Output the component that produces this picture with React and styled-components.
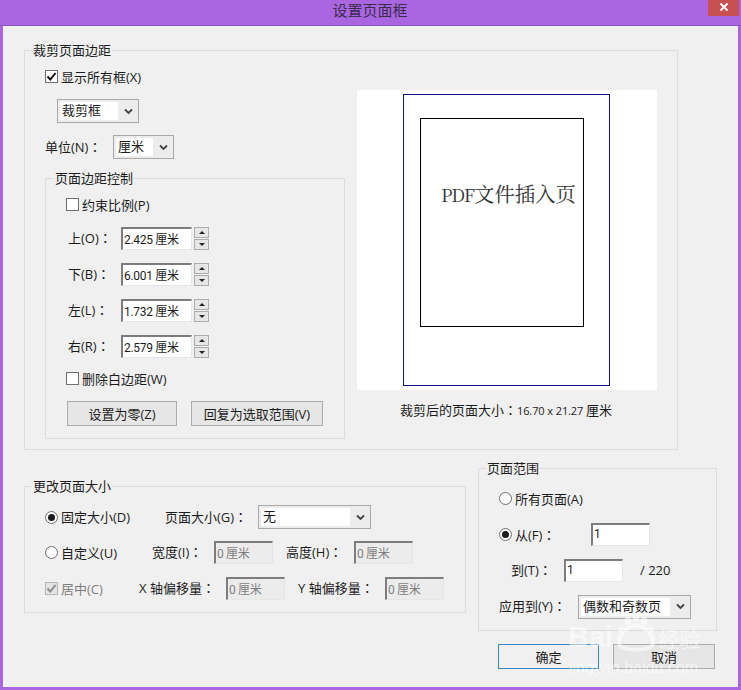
import styled, { createGlobalStyle } from "styled-components";

const GlobalStyle = createGlobalStyle`
  html, body { margin: 0; padding: 0; background: #a966e0; }
  body { font-family: "Open Sans", "Noto Sans CJK SC", sans-serif; font-size: 13px; color: #1c1c1c; }
`;

const Win = styled.div`
  position: relative;
  width: 741px;
  height: 690px;
  background: #a966e0;
  overflow: hidden;
`;

const TitleBar = styled.div`
  height: 26px;
  box-sizing: border-box;
  border-bottom: 1px solid #8d55bd;
  display: flex;
  align-items: center;
  justify-content: center;
  font-size: 15px;
  line-height: 22px;
  padding: 0 1px 5px 0;
  color: #3b2b4e;
`;

const CloseBtn = styled.div`
  position: absolute;
  top: 0;
  right: 2px;
  width: 31px;
  height: 16px;
  padding-bottom: 2px;
  box-sizing: border-box;
  background: #c75050;
  display: flex;
  align-items: center;
  justify-content: center;
`;

const Body = styled.div`
  margin: 0 3px;
  height: 661px;
  background: #f0f0f0;
  padding-left: 21px;
  box-sizing: border-box;
  overflow: hidden;
`;

const Group = styled.fieldset`
  margin: ${(p) => p.$mt || 0}px 0 0 0;
  padding: 0;
  width: ${(p) => p.$w}px;
  box-sizing: border-box;
  border: 1px solid #dcdcdc;
  min-width: 0;
`;

const Legend = styled.legend`
  margin-left: ${(p) => p.$ml || 7}px;
  padding: 0 1px;
  height: 16px;
  line-height: 16px;
  font-size: 13px;
`;

const Inset = styled.div`
  padding: 0 0 ${(p) => p.$pb || 0}px 20px;
`;

const TopSplit = styled.div`
  display: flex;
`;

const LeftCol = styled.div`
  width: 299px;
  flex: none;
`;

const Row = styled.div`
  display: flex;
  align-items: center;
  height: ${(p) => p.$h || 23}px;
  margin-top: ${(p) => p.$mt || 0}px;
  margin-left: ${(p) => p.$ml || 0}px;
`;

const Label = styled.span`
  flex: none;
  width: ${(p) => (p.$w ? `${p.$w}px` : "auto")};
  margin-left: ${(p) => p.$ml || 0}px;
  margin-bottom: 2px;
  color: ${(p) => (p.$dim ? "#7e7e7e" : "inherit")};
  white-space: nowrap;
`;

const Colon = styled.span`
  font-family: "Noto Sans CJK TC", sans-serif;
`;

const Opt = styled.div`
  display: flex;
  align-items: center;
  flex: none;
  width: ${(p) => (p.$w ? `${p.$w}px` : "auto")};
  gap: 3px;
  ${Label} { margin-bottom: 1px; }
`;

const CheckBox = styled.span`
  width: 13px;
  height: 13px;
  flex: none;
  box-sizing: border-box;
  border: 1px solid ${(p) => (p.$dim ? "#b5b5b5" : "#6f6f6f")};
  background: ${(p) => (p.$dim ? "#e4e4e4" : "#fff")};
  display: flex;
  align-items: center;
  justify-content: center;
`;

const Radio = styled.span`
  width: 13px;
  height: 13px;
  flex: none;
  box-sizing: border-box;
  border: 1px solid #6f6f6f;
  border-radius: 50%;
  background: #fff;
  display: flex;
  align-items: center;
  justify-content: center;
  &::after {
    content: "";
    display: ${(p) => (p.$on ? "block" : "none")};
    width: 7px;
    height: 7px;
    border-radius: 50%;
    background: #1c1c1c;
  }
`;

const SelectBox = styled.div`
  display: flex;
  align-items: center;
  flex: none;
  width: ${(p) => p.$w}px;
  height: 24px;
  box-sizing: border-box;
  border: 1px solid #a9a9a9;
  background: #ececec;
  padding: 2px 0 2px 2px;
`;

const SelectText = styled.div`
  flex: 1;
  height: 100%;
  background: #fff;
  padding-left: 2px;
  line-height: 16px;
  font-size: 13px;
  overflow: hidden;
  white-space: nowrap;
`;

const SelectArrow = styled.div`
  width: 20px;
  flex: none;
  display: flex;
  align-items: center;
  justify-content: center;
`;

const Field = styled.input`
  flex: none;
  width: ${(p) => p.$w || 59}px;
  height: 23px;
  box-sizing: border-box;
  padding: 0 0 2px 1px;
  margin: 0;
  font-family: Roboto, "Noto Sans CJK SC", sans-serif;
  font-size: 12px;
  letter-spacing: -0.3px;
  outline: none;
  border-style: solid;
  border-width: 2px 1px 1px 2px;
  border-color: #7d7d7d #e6e6e6 #e6e6e6 #7d7d7d;
  background: ${(p) => (p.disabled ? "#ececec" : "#fff")};
  color: ${(p) => (p.disabled ? "#7e7e7e" : "#1c1c1c")};
`;

const Spin = styled.div`
  display: flex;
  flex-direction: column;
  margin-left: 2px;
  gap: 1px;
`;

const SpinBtn = styled.div`
  width: 15px;
  height: 11px;
  box-sizing: border-box;
  border: 1px solid #adadad;
  background: #e6e6e6;
  display: flex;
  align-items: center;
  justify-content: center;
  &::after {
    content: "";
    width: 0;
    height: 0;
    border-left: 3px solid transparent;
    border-right: 3px solid transparent;
    border-${(p) => (p.$up ? "bottom" : "top")}: 3px solid #222;
  }
`;

const BtnRow = styled(Row)`
  gap: 14px;
`;

const PushBtn = styled.div`
  flex: none;
  width: ${(p) => p.$w}px;
  height: 25px;
  padding-bottom: 1px;
  box-sizing: border-box;
  border: 1px solid ${(p) => (p.$primary ? "#3a86bf" : "#acacac")};
  background: ${(p) => (p.$primary ? "#f0f0f0" : "#e6e6e6")};
  display: flex;
  align-items: center;
  justify-content: center;
  white-space: nowrap;
`;

const PreviewCol = styled.div`
  width: 300px;
  margin: 32px 0 0 13px;
  flex: none;
`;

const Preview = styled.div`
  width: 300px;
  height: 300px;
  background: #fff;
  padding: 4px 0 0 46px;
  box-sizing: border-box;
`;

const PageBox = styled.div`
  width: 207px;
  height: 292px;
  box-sizing: border-box;
  border: 1px solid #14147e;
  padding: 23px 0 0 16px;
`;

const CropBox = styled.div`
  width: 164px;
  height: 209px;
  box-sizing: border-box;
  border: 1px solid #000;
  padding: 62px 0 0 20px;
  font-family: "Noto Serif CJK SC", "Liberation Serif", "Noto Sans CJK SC", serif;
  font-size: 20.4px;
  line-height: 26px;
  color: #333;
  white-space: nowrap;
`;

const Latin = styled.span`
  font-size: 18px;
  letter-spacing: -1px;
`;

const Caption = styled.div`
  margin: 11px 2px 0 0;
  text-align: center;
  font-size: 13px;
  line-height: 18px;
  white-space: nowrap;
`;

const Small = styled.span`
  font-size: 11px;
  letter-spacing: -0.1px;
`;

const BottomSplit = styled.div`
  display: flex;
  align-items: flex-start;
`;

const RightCol = styled.div`
  margin-left: 12px;
  width: 239px;
  flex: none;
`;

const FooterRow = styled.div`
  display: flex;
  gap: 14px;
  margin: 13px 0 0 20px;
`;

const Watermark = styled.div`
  position: absolute;
  left: 568px;
  top: 612px;
  width: 140px;
  color: #fff;
  opacity: 0.55;
  pointer-events: none;
`;

const WmTop = styled.div`
  display: flex;
  align-items: flex-end;
  height: 42px;
  font-family: "Liberation Sans", sans-serif;
  font-weight: 700;
  font-size: 29px;
  line-height: 34px;
  white-space: nowrap;
`;

const WmCn = styled.span`
  font-family: "Noto Sans CJK SC", sans-serif;
  font-size: 21px;
  line-height: 32px;
  font-weight: 400;
`;

const WmUrl = styled.div`
  font-family: "Liberation Sans", sans-serif;
  font-size: 16px;
  line-height: 18px;
  margin: 5px 0 0 1px;
  white-space: nowrap;
`;

const Chevron = () => (
  <svg width="9" height="7" viewBox="0 0 9 7">
    <path d="M1 1.5 L4.5 5 L8 1.5" fill="none" stroke="#444" strokeWidth="1.8" />
  </svg>
);

const Tick = ({ color }) => (
  <svg width="11" height="11" viewBox="0 0 11 11">
    <path d="M1.5 5.5 L4.3 8.5 L9.5 2" fill="none" stroke={color || "#111"} strokeWidth="2" />
  </svg>
);

const Select = ({ w, children }) => (
  <SelectBox $w={w}>
    <SelectText>{children}</SelectText>
    <SelectArrow><Chevron /></SelectArrow>
  </SelectBox>
);

const margins = [
  { label: "上(O)", value: "2.425 厘米" },
  { label: "下(B)", value: "6.001 厘米" },
  { label: "左(L)", value: "1.732 厘米" },
  { label: "右(R)", value: "2.579 厘米" },
];

const App = () => {
  return (
    <Win>
      <GlobalStyle />
      <TitleBar>设置页面框</TitleBar>
      <CloseBtn>
        <svg width="10" height="10" viewBox="0 0 10 10">
          <path d="M1.5 1.5 L8.5 8.5 M8.5 1.5 L1.5 8.5" stroke="#fff" strokeWidth="1.8" />
        </svg>
      </CloseBtn>
      <Body>
        <Group $w={654} $mt={16}>
          <Legend>裁剪页面边距</Legend>
          <Inset $pb={10}>
            <TopSplit>
              <LeftCol>
                <Row $h={17} $mt={10}>
                  <Opt><CheckBox><Tick /></CheckBox><Label>显示所有框(X)</Label></Opt>
                </Row>
                <Row $h={24} $mt={14} $ml={12}>
                  <Select w={82}>裁剪框</Select>
                </Row>
                <Row $h={24} $mt={12}>
                  <Label $w={68}>单位(N)<Colon>：</Colon></Label>
                  <Select w={61}>厘米</Select>
                </Row>
                <Group $w={300} $mt={11}>
                  <Legend $ml={8}>页面边距控制</Legend>
                  <Inset $pb={12}>
                    <Row $h={17} $mt={10}>
                      <Opt><CheckBox /><Label>约束比例(P)</Label></Opt>
                    </Row>
                    {margins.map((m, i) => (
                      <Row key={m.label} $mt={i === 0 ? 14 : 13}>
                        <Label $w={53} $ml={2}>{m.label}<Colon>：</Colon></Label>
                        <Field $w={71} readOnly value={m.value} />
                        <Spin><SpinBtn $up /><SpinBtn /></Spin>
                      </Row>
                    ))}
                    <Row $h={17} $mt={12}>
                      <Opt><CheckBox /><Label>删除白边距(W)</Label></Opt>
                    </Row>
                    <BtnRow $h={25} $mt={14} $ml={1}>
                      <PushBtn $w={110}>设置为零(Z)</PushBtn>
                      <PushBtn $w={132}>回复为选取范围(V)</PushBtn>
                    </BtnRow>
                  </Inset>
                </Group>
              </LeftCol>
              <PreviewCol>
                <Preview>
                  <PageBox>
                    <CropBox><Latin>PDF</Latin>文件插入页</CropBox>
                  </PageBox>
                </Preview>
                <Caption>裁剪后的页面大小<Colon>：</Colon><Small>16.70 x 21.27 </Small>厘米</Caption>
              </PreviewCol>
            </TopSplit>
          </Inset>
        </Group>

        <BottomSplit>
          <Group $w={442} $mt={28}>
            <Legend>更改页面大小</Legend>
            <Inset $pb={12}>
              <Row $h={24} $mt={11}>
                <Opt $w={120}><Radio $on /><Label>固定大小(D)</Label></Opt>
                <Label $w={93}>页面大小(G)<Colon>：</Colon></Label>
                <Select w={113}>无</Select>
              </Row>
              <Row $mt={12}>
                <Opt $w={107}><Radio /><Label>自定义(U)</Label></Opt>
                <Label $w={62}>宽度(I)<Colon>：</Colon></Label>
                <Field disabled value="0 厘米" readOnly />
                <Label $w={68} $ml={13}>高度(H)<Colon>：</Colon></Label>
                <Field disabled value="0 厘米" readOnly />
              </Row>
              <Row $mt={13}>
                <Opt $w={94}><CheckBox $dim><Tick color="#8a8a8a" /></CheckBox><Label $dim>居中(C)</Label></Opt>
                <Label $w={87}>X 轴偏移量<Colon>：</Colon></Label>
                <Field disabled value="0 厘米" readOnly />
                <Label $w={87} $ml={13}>Y 轴偏移量<Colon>：</Colon></Label>
                <Field disabled value="0 厘米" readOnly />
              </Row>
            </Inset>
          </Group>

          <RightCol>
            <Group $w={239} $mt={10}>
              <Legend>页面范围</Legend>
              <Inset $pb={12}>
                <Row $h={17} $mt={14}>
                  <Opt><Radio /><Label>所有页面(A)</Label></Opt>
                </Row>
                <Row $mt={16}>
                  <Opt $w={92}><Radio $on /><Label>从(F)<Colon>：</Colon></Label></Opt>
                  <Field readOnly value="1" />
                </Row>
                <Row $mt={13}>
                  <Label $w={53} $ml={12}>到(T)<Colon>：</Colon></Label>
                  <Field readOnly value="1" />
                  <Label $ml={17}>/ 220</Label>
                </Row>
                <Row $mt={13}>
                  <Label $w={79}>应用到(Y)<Colon>：</Colon></Label>
                  <Select w={113}>偶数和奇数页</Select>
                </Row>
              </Inset>
            </Group>
            <FooterRow>
              <PushBtn $primary $w={101}>确定</PushBtn>
              <PushBtn $w={102}>取消</PushBtn>
            </FooterRow>
          </RightCol>
        </BottomSplit>
      </Body>
      <Watermark>
        <WmTop>
          Bai
          <svg width="45" height="42" viewBox="0 0 45 42">
            <ellipse cx="15" cy="9" rx="3.5" ry="4.5" fill="#fff" />
            <ellipse cx="23" cy="5" rx="3.5" ry="4.5" fill="#fff" />
            <ellipse cx="31" cy="9" rx="3.5" ry="4.5" fill="#fff" />
            <ellipse cx="8" cy="18" rx="3" ry="4" fill="#fff" />
            <ellipse cx="38" cy="18" rx="3" ry="4" fill="#fff" />
            <path d="M6 31 C6 20 16 14 23 14 C30 14 40 20 40 31 C40 40 6 40 6 31 Z" fill="none" stroke="#fff" strokeWidth="4" />
          </svg>
          <WmCn>经验</WmCn>
        </WmTop>
        <WmUrl>jingyan.baidu.com</WmUrl>
      </Watermark>
    </Win>
  );
};

export default App;
